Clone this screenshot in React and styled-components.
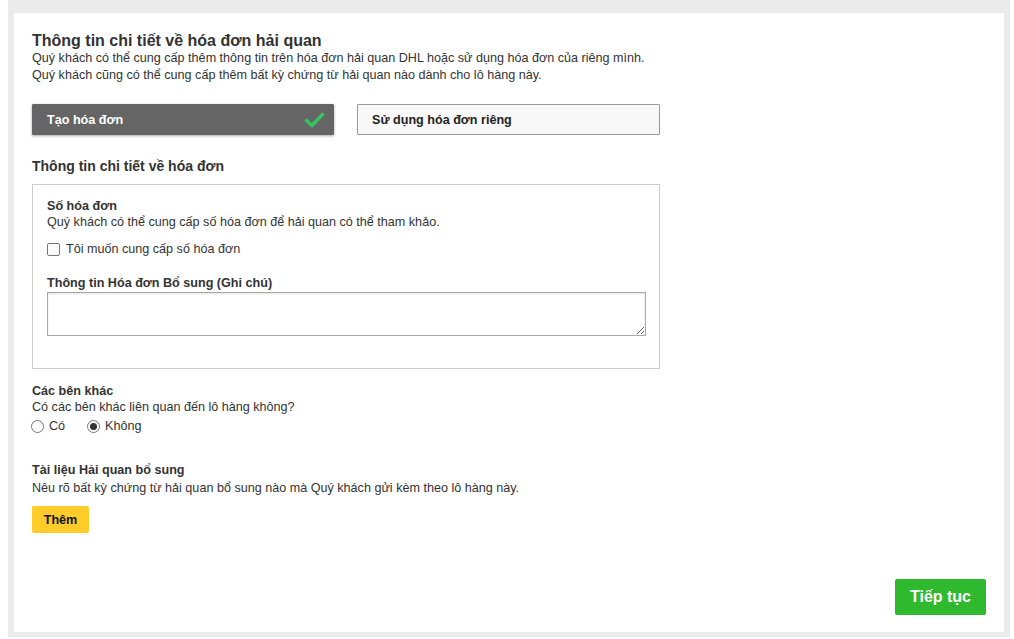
import React, { useState } from 'react';
import styled, { createGlobalStyle } from 'styled-components';

const GlobalStyle = createGlobalStyle`
  html, body {
    margin: 0;
    padding: 0;
    background: #ffffff;
  }
  body {
    font-family: 'Liberation Sans', Arial, sans-serif;
    color: #333333;
  }
`;

const Frame = styled.div`
  margin-left: 8px;
  width: 1002px;
  height: 637px;
  box-sizing: border-box;
  padding: 13px 6px 5px 6px;
  background: #ebebeb;
`;

const Card = styled.div`
  height: 100%;
  box-sizing: border-box;
  background: #ffffff;
  padding: 19px 18px 17px 18px;
  display: flex;
  flex-direction: column;
`;

const Title = styled.h1`
  margin: 0;
  font-size: 16px;
  font-weight: bold;
  line-height: 18px;
  color: #333;
`;

const Text = styled.p`
  margin: 0;
  font-size: 12.6px;
  line-height: 17px;
  color: #333;
`;

const Choices = styled.div`
  display: flex;
  gap: 23px;
  margin-top: 20px;
`;

const Choice = styled.button`
  width: ${({ active }) => (active ? '302px' : '303px')};
  height: 31px;
  box-sizing: border-box;
  display: flex;
  align-items: center;
  justify-content: space-between;
  padding: 0 8px 0 14px;
  font-family: inherit;
  font-size: 12.6px;
  font-weight: bold;
  text-align: left;
  cursor: pointer;
  border: 1px solid ${({ active }) => (active ? '#656565' : '#999')};
  background: ${({ active }) => (active ? '#656565' : '#f8f8f8')};
  color: ${({ active }) => (active ? '#fff' : '#222')};
  box-shadow: ${({ active }) => (active ? '0 1px 3px rgba(0,0,0,0.35)' : 'none')};
  border-radius: 1px;
`;

const SubTitle = styled.h2`
  margin: 23px 0 0;
  font-size: 14px;
  font-weight: bold;
  line-height: 17px;
  color: #333;
`;

const Panel = styled.div`
  margin-top: 9px;
  width: 628px;
  height: 185px;
  box-sizing: border-box;
  border: 1px solid #cccccc;
  padding: 13px 14px;
`;

const Label = styled.div`
  font-size: 12.6px;
  font-weight: bold;
  line-height: 16px;
  color: #333;
  margin-top: ${({ top }) => top || 0}px;
  margin-bottom: ${({ bottom }) => bottom || 0}px;
`;

const CheckRow = styled.label`
  display: flex;
  align-items: center;
  gap: 6px;
  margin-top: 10px;
  font-size: 12.6px;
  line-height: 17px;
  color: #333;
`;

const Box = styled.span`
  width: 11px;
  height: 11px;
  border: 1px solid #767676;
  border-radius: 2px;
  background: #fff;
`;

const Note = styled.textarea`
  display: block;
  margin-top: 1px;
  width: 599px;
  height: 44px;
  box-sizing: border-box;
  border: 1px solid #a9a9a9;
  box-shadow: inset 0 1px 2px rgba(0, 0, 0, 0.12);
  resize: vertical;
  font-family: inherit;
`;

const Section = styled.div`
  margin-top: ${({ top }) => top}px;
`;

const RadioRow = styled.div`
  display: flex;
  gap: 22px;
  margin-top: 2px;
  margin-left: -1px;
`;

const RadioItem = styled.label`
  display: flex;
  align-items: center;
  gap: 5px;
  font-size: 12.6px;
  line-height: 17px;
  color: #333;
`;

const Radio = styled.span`
  width: 11px;
  height: 11px;
  border-radius: 50%;
  border: 1px solid #767676;
  background: #fff;
  display: flex;
  align-items: center;
  justify-content: center;
  &::after {
    content: '';
    display: ${({ checked }) => (checked ? 'block' : 'none')};
    width: 7px;
    height: 7px;
    border-radius: 50%;
    background: #333;
  }
`;

const AddButton = styled.button`
  margin-top: 9px;
  width: 57px;
  height: 27px;
  border: none;
  border-radius: 2px;
  background: #ffcc2a;
  font-family: inherit;
  font-size: 12.6px;
  font-weight: bold;
  color: #111;
  cursor: pointer;
`;

const Footer = styled.div`
  margin-top: auto;
  display: flex;
  justify-content: flex-end;
`;

const NextButton = styled.button`
  width: 91px;
  height: 36px;
  border: none;
  border-radius: 2px;
  background: #2fb92f;
  color: #fff;
  font-family: inherit;
  font-size: 16px;
  font-weight: bold;
  cursor: pointer;
`;

const Check = () => (
  <svg width="21" height="16" viewBox="0 0 21 16">
    <path d="M2.5 8.5 L8 13.5 L18.5 2.5" fill="none" stroke="#35c35e" strokeWidth="3.6" strokeLinecap="round" strokeLinejoin="round" />
  </svg>
);

const App = () => {
  const [mode, setMode] = useState('create');
  const [other, setOther] = useState('no');
  return (
    <>
      <GlobalStyle />
      <Frame>
        <Card>
          <Title>Thông tin chi tiết về hóa đơn hải quan</Title>
          <Text>Quý khách có thể cung cấp thêm thông tin trên hóa đơn hải quan DHL hoặc sử dụng hóa đơn của riêng mình.</Text>
          <Text>Quý khách cũng có thể cung cấp thêm bất kỳ chứng từ hải quan nào dành cho lô hàng này.</Text>

          <Choices>
            <Choice active={mode === 'create'} onClick={() => setMode('create')}>
              Tạo hóa đơn
              {mode === 'create' && <Check />}
            </Choice>
            <Choice active={mode === 'own'} onClick={() => setMode('own')}>
              Sử dụng hóa đơn riêng
              {mode === 'own' && <Check />}
            </Choice>
          </Choices>

          <SubTitle>Thông tin chi tiết về hóa đơn</SubTitle>
          <Panel>
            <Label>Số hóa đơn</Label>
            <Text>Quý khách có thể cung cấp số hóa đơn để hải quan có thể tham khảo.</Text>
            <CheckRow>
              <Box />
              Tôi muốn cung cấp số hóa đơn
            </CheckRow>
            <Label top={17}>Thông tin Hóa đơn Bổ sung (Ghi chú)</Label>
            <Note />
          </Panel>

          <Section top={14}>
            <Label>Các bên khác</Label>
            <Text>Có các bên khác liên quan đến lô hàng không?</Text>
            <RadioRow>
              <RadioItem onClick={() => setOther('yes')}>
                <Radio checked={other === 'yes'} />
                Có
              </RadioItem>
              <RadioItem onClick={() => setOther('no')}>
                <Radio checked={other === 'no'} />
                Không
              </RadioItem>
            </RadioRow>
          </Section>

          <Section top={27}>
            <Label bottom={2}>Tài liệu Hải quan bổ sung</Label>
            <Text>Nêu rõ bất kỳ chứng từ hải quan bổ sung nào mà Quý khách gửi kèm theo lô hàng này.</Text>
            <AddButton>Thêm</AddButton>
          </Section>

          <Footer>
            <NextButton>Tiếp tục</NextButton>
          </Footer>
        </Card>
      </Frame>
    </>
  );
};

export default App;
